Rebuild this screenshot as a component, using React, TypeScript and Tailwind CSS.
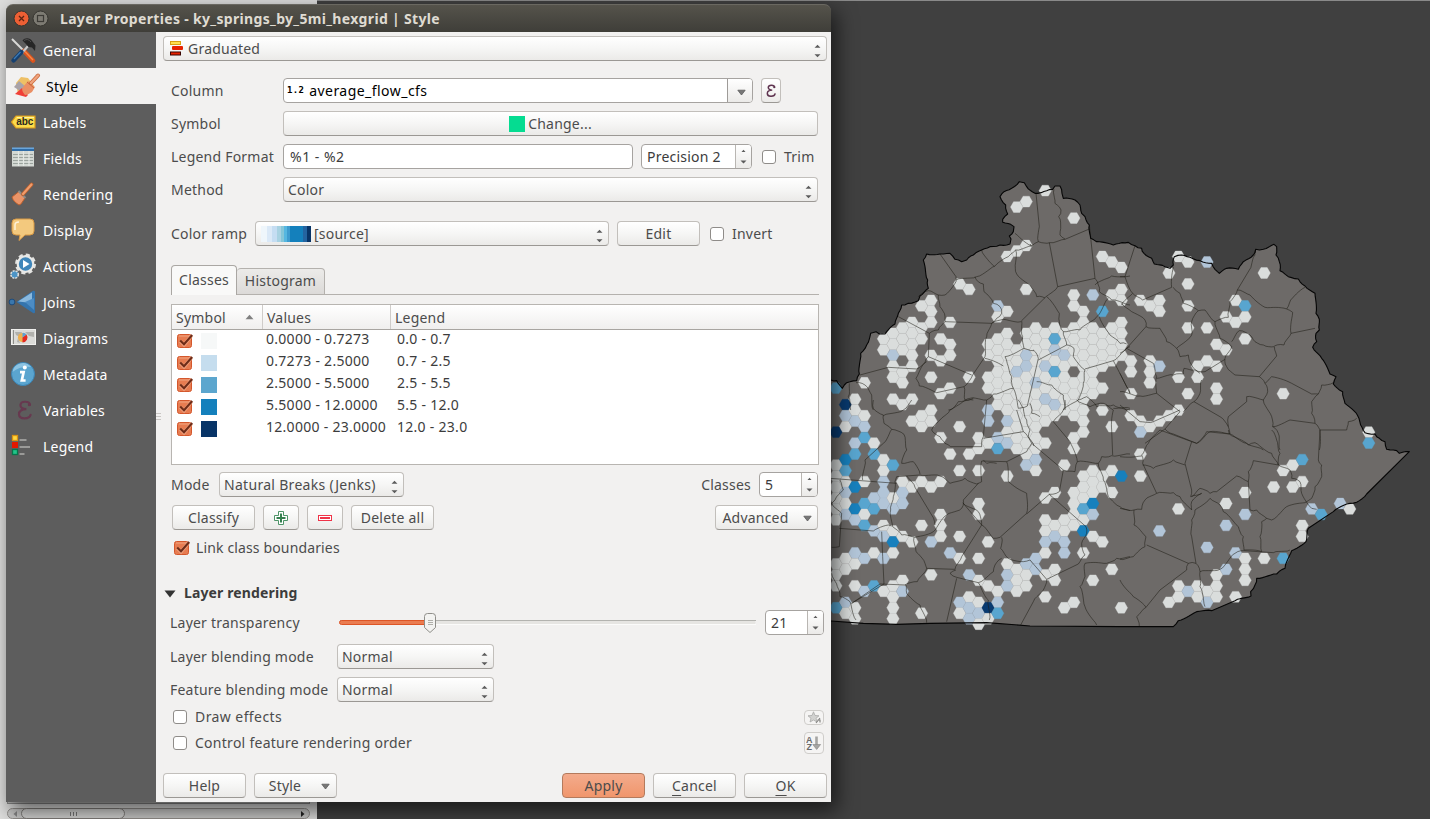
import React from "react";

type P = { children?: React.ReactNode; className?: string };

const HEX_COLORS: Record<string, string> = {
  w: "#dadddc",
  l: "#b2c5d8",
  m: "#58a5cf",
  b: "#1780bd",
  d: "#083a70",
};

// column -> runs of rows, each prefixed with its class letter
const HEXES: Record<string, string> = {
  "-1": "m-1 d3 w6:11 w15:17 m19",
  "0": "d0 l1 w2 b5 m6 w7 l8 w9 l10 w14:15 l18 w19",
  "1": "w0:1 l2 l4 m5 b8 b10 l11 l14 w15 w17 w19:20",
  "2": "w-2 w1 l2 m3 w7 m9 w10 m11 l14 l17",
  "3": "w4 m5 l9 m10 l12 w14 m17",
  "4": "w-6:-5 w5:6 l7:9 w11 l12 l14 w17",
  "5": "w-6:-5 l-4 w-3:-2 w0 m6 w9 l10 w12 b13 w14 w17:20",
  "6": "w-7:-5 w-3:-2 w0 w7 l8:9 w12 w16 l17",
  "7": "w-7:-3 w0 w2 w8 w13",
  "8": "w-9 w-7:-6 w1:2 w7 w11 w19",
  "9": "w-9:-7 w-4 w-2 w1:2 w8 l13 w16",
  "10": "w-6 w-4 w-1 w3 w7 w10:12",
  "11": "w-7 w-5:-4 w-1 w5 l14",
  "12": "w-11 w2 w6 w12 w14 l18 w19",
  "13": "w-10 w-2 w5 l16 w18 l19:20",
  "14": "w3:4 w6 w9:10 w14 w16 w18 l19 w20",
  "15": "w-5:-4 w-2:-1 l1:2 w4 w13 w17 d19 w20",
  "16": "l-9 w-8 w-6:0 l3 m4 w17 l18 m19",
  "17": "w-13 w-8 w-6:1 l2 w3 l4 w7 w15 l16:17",
  "18": "w-18 w-14 w-5:-4 l-3 w-2:4 w15:17",
  "19": "w-18 w-14 w-10 w-6:-5 l-4:-3 w-2:5 l6 l15 w16:17",
  "20": "w-7:-3 l-2 w-1:4 l5 w6 l14:15",
  "21": "w-19 w-6:-4 l-3 w-2:-1 l0 w1:2 w4 w9 w11:12 l13 w14 w16 w18",
  "22": "w-7 m-6 l-5 w-4 m-3 w-2:-1 l0 w1 w8 w11 l12 w15:16",
  "23": "w-6:-5 l-4 w-3:1 w6 w11:12 l13:14 w19",
  "24": "w-17 w-10:-9 w-7:-4 w-2:-1 w0:1 w3:4 w8:11 w18",
  "25": "w-8:3 w7:9 m10 w11 b12 w14",
  "26": "l-10 w-7:-1 w6:8 b9 l10 w12 w16",
  "27": "w-13 m-8 w-6:-3 w-1 w1 w7:8 w13",
  "28": "w-13 w-10 w-7:-4 w2 w6 w8 w15",
  "29": "w-12 w-10:-9 w-7:-4 b7 w19",
  "30": "w-4:-3 w-1 w1",
  "31": "w-9 w2 l3 w5 w7",
  "32": "w-9 w-4:-2 w2",
  "33": "w-9:-8 l-3 w2 l12",
  "34": "w-12 w1 w18",
  "35": "w-13 w-2 w1 w10 w17:18",
  "36": "w-13 w-11 w-9 w-7 w-1 l17",
  "37": "w-3:-2 w17:18",
  "38": "l-13 w-7 w-4 l13 w17 l18",
  "39": "w-5 w-3 w-1:0 w16:18",
  "40": "w-8 w-5 w9 l11 l15",
  "41": "w-9 w-7 l14 w18",
  "42": "m-9 w-8 w-6 w8 l10 w14:16",
  "44": "w-12 w14",
  "45": "w8",
  "46": "w-1 w6 m14",
  "47": "w6 w8",
  "48": "m5 w7 w11:12",
  "49": "l10",
  "50": "m10",
  "52": "l9",
  "53": "w10",
  "55": "w3 m4",
};

const OUTLINE =
  "M-40 640L3 630L20 632L37 655L43 645L50 638L80 632L88 612L92 550L110 525L122 490L138 485L148 492L165 492L195 462L205 430L215 405L235 400L265 392L270 378L295 355L293 330L285 290L280 270L290 252L330 252L360 250L375 268L395 275L410 270L430 255L455 240L480 230L510 225L540 222L543 207L538 198L550 185L552 170L542 163L518 157L518 148L533 132L527 105L510 80L522 65L545 55L568 35L583 38L590 50L615 70L625 70L650 62L668 58L675 48L690 48L696 70L700 85L735 90L750 105L755 130L765 140L778 165L782 205L800 215L850 225L875 218L895 217L915 227L935 235L942 250L965 265L973 282L1005 290L1020 295L1030 285L1033 260L1055 255L1080 262L1110 272L1145 280L1155 298L1168 310L1190 295L1225 298L1240 275L1270 255L1277 238L1300 238L1332 223L1340 230L1338 255L1348 275L1350 302L1375 320L1405 327L1425 348L1455 370L1458 430L1468 448L1468 480L1458 490L1460 515L1448 532L1475 565L1500 612L1518 620L1510 642L1538 665L1545 700L1582 735L1592 765L1605 788L1635 792L1648 805L1665 815L1670 838L1700 842L1708 850L1738 845L1610 972L1580 997L1550 1002L1510 1025L1435 1075L1428 1115L1385 1142L1375 1165L1365 1195L1340 1212L1280 1225L1275 1245L1262 1265L1263 1278L1215 1292L1145 1322L1100 1325L1045 1352L1030 1370L870 1370L600 1368L470 1358L300 1360L200 1363L100 1360L3 1353L-40 1350Z";

// county lines of the four map quarters, each in its own tripled local units
const NW =
  "M618 70L628 170L625 215M672 58L675 100L693 120L686 140L692 165L690 195L705 207M625 215L660 218L705 208L778 177M778 165L795 325L805 345L808 365M658 218L683 350L648 380L575 452M683 350L795 325M555 190L605 228L557 240L556 295L560 312L600 345L620 380L645 384M605 228L625 215M605 228L600 222M557 240L535 260L495 288L440 320L378 330M455 240L478 275L493 290M330 252L378 320L378 335L345 375L325 375L295 362L265 380M325 375L330 410L345 440L345 455L485 460L520 448L573 455M435 320L445 335L460 342L462 365L478 380L490 400L510 410L515 430L500 445L485 460L470 500L465 560L428 615L402 650L405 690M205 440L298 490L295 560L285 578L258 625L268 648L320 668L402 650M345 455L325 480L298 490M90 615L175 592L260 597L290 575M295 560L425 615M465 565L520 588M575 452L578 500L582 535L525 560L535 590L545 620L550 655L490 672L470 690L420 685L385 705L355 720M610 540L625 565L592 708L565 715L550 655M625 570L710 525L700 485L688 455L688 430L650 380M700 485L750 480L800 440L835 385M795 345L845 318L900 318M808 365L845 390L900 405M808 440L840 495L870 520L890 522M710 525L732 535L730 560L765 600L760 640L745 690L700 720M765 597L850 572L900 530M850 572L890 650L900 670M620 635L665 645L700 675L705 720M78 638L105 645L125 675L130 720M405 690L430 685M745 690L770 680L800 710L850 705L900 720M58 640L55 680L62 720M582 535L612 542";
const SW =
  "M130 0L130 25L160 45L162 70L185 88L222 103L230 150L215 190L250 185L270 222M160 47L220 30L245 0M185 88L160 130L105 180L98 240M305 90L330 110L345 130L362 140L455 140L460 110L470 0M305 90L330 60L360 30L385 5L430 0M460 115L580 95L560 30M580 95L605 130L590 155L530 185L455 183L455 245L440 252L405 235L360 250L330 228L270 225L200 230L195 245L190 290L182 330L188 380L215 405L255 412L310 395L350 345L395 325L400 300L445 250M605 130L700 210L735 215L742 185L805 190L815 170L845 167L900 162M530 185L535 245L590 280L590 340L510 412L490 415L455 375L398 308M400 310L445 335L455 375L395 470L375 508L290 505L285 490L258 455L252 412M700 210L688 275L658 283L590 342M658 283L768 380L770 400L755 430L765 465L745 492L650 538L600 480L580 485L535 475L512 445L515 412M515 475L495 495L490 515L445 548L380 532L360 520L378 510M445 548L475 600L478 660M380 535L350 665M650 538L640 570L610 605L572 675M765 490L765 530L750 560L765 620L800 675M765 490L830 490L860 475L900 470M0 235L200 250M230 228L255 262L305 345L315 375M30 240L40 270L15 300L5 310L35 340L28 440L5 442M28 385L130 393L175 375L185 378M155 395L158 470L162 552M65 610L150 552L228 555L230 580L270 615L290 668M162 552L65 610M290 505L262 545L225 555M5 520L22 560L30 590L60 605L78 660M805 190L820 240L835 290L870 320L900 332M670 65L720 125L742 185M670 65L700 30L705 0M740 0L780 20L820 10L850 30L845 90L848 165M850 25L900 25M460 180L470 190L500 190M565 0L580 25L590 60L600 90L595 110L612 138M600 10L605 40L630 50";
const NE =
  "M45 47L15 140L38 190L68 210L155 172L160 110M0 140L15 140M38 190L5 225M160 172L180 190L190 220L235 242L255 240L285 275L300 325L335 350L315 385L320 410L345 435L418 440L470 378L463 350L430 345L405 335L390 315L358 302L335 335M285 275L325 262L330 215L352 180L388 120L405 75L407 58M352 180L390 195L435 232L500 237L518 247L513 310L585 295M500 237L512 210L555 172M513 310L492 345L463 348M5 220L35 245L75 270L78 290L20 355L100 400L110 440L110 490L60 498L0 485M78 290L120 295L140 335L170 355L215 315L215 275L235 242M170 355L180 380L205 375L215 405L240 430M110 445L160 435L190 432L192 415L225 420L255 425L315 388M245 450L240 490L222 515L300 560L325 590L330 612L270 605L230 640L160 612L135 597L75 640M110 490L180 545L135 597M20 355L0 370M0 430L30 490M0 525L60 575L100 575L180 540M222 515L190 545M325 590L325 560L380 515L380 500L430 510L443 485L435 460L418 440M435 460L455 440L515 460L575 492L595 492L605 465L640 458M595 492L575 515L575 550L585 580L600 600L680 600L685 575L710 565M430 510L455 560L458 590L475 610L480 660M458 590L510 570L585 580M600 600L598 660M330 612L380 640L430 660";
const SE =
  "M120 0L85 40L65 75L68 100L110 190L160 188L180 200L215 240L215 215L245 190L212 200L215 180L195 100L215 35L230 40L260 5L328 12L385 45L405 38L455 70L475 105L400 92L385 125L385 155L350 138L290 185L270 190L240 175L215 200M120 0L215 35M68 105L100 115L160 90L195 105M65 78L0 80M110 190L75 210L65 238L42 240L42 285L78 320L75 350L40 380L0 388M42 240L0 235M225 240L270 205L300 225L310 245L355 290L370 320L372 360L425 365L420 320L425 275L440 265L410 240L390 240L385 155M225 240L215 270L215 320L228 400L205 400L80 345M205 400L200 420L120 480L78 532L50 560L58 590M228 400L240 425L300 418L345 370L372 362L460 368L510 360M440 265L455 270L500 230L555 218L575 205L585 170L605 140L605 105L595 90L600 0M455 0L470 30L480 70L475 105L510 120L515 145L540 155L545 190L575 235L590 238M240 425L240 470L255 530M0 450L40 500L78 532M328 12L325 0";

// Breaks medium-length segments into small steps so borders read as rivers and ridges.
function roughen(d: string, amp: number) {
  let px = 0;
  let py = 0;
  let n = 0;
  return (d.match(/[MLZ][^MLZ]*/g) ?? [])
    .map((t) => {
      if (t[0] === "Z") return t;
      const [x, y] = t.slice(1).trim().split(" ").map(Number);
      let out = "";
      const len = Math.hypot(x - px, y - py);
      if (t[0] === "L" && len > 12 && len < 66) {
        const steps = Math.floor(len / 8);
        for (let i = 1; i < steps; i++) {
          n++;
          const o = Math.sin(n * 12.9898) * amp;
          const k = i / steps;
          out += `L${(px + (x - px) * k - ((y - py) / len) * o).toFixed(1)} ${(py + (y - py) * k + ((x - px) / len) * o).toFixed(1)}`;
        }
      }
      px = x;
      py = y;
      return out + t;
    })
    .join("");
}

const EDGE = roughen(OUTLINE, 2.2);

function hexes() {
  const out: { x: number; y: number; k: string }[] = [];
  for (const c of Object.keys(HEXES)) {
    const col = Number(c);
    const odd = Math.abs(col) % 2 === 1;
    for (const t of HEXES[c].split(" ")) {
      const [a, b] = t.slice(1).split(":");
      for (let r = Number(a); r <= Number(b ?? a); r++) {
        out.push({ x: 845.4 + 9.516 * col, y: (odd ? 399.2 : 404.7) + 10.977 * r, k: t[0] });
      }
    }
  }
  return out;
}

function MapCanvas() {
  return (
    <svg width="1430" height="819" viewBox="0 0 1430 819" className="block">
      <path d="M0 0.5H1430" stroke="#8a8a8a" />
      <g transform="translate(830 170) scale(.33333)">
        <path d={EDGE} fill="#6d6a68" />
      </g>
      <g>
        {hexes().map((h, i) => (
          <path
            key={i}
            d="M-6.2 0L-3.1 -5.4H3.1L6.2 0L3.1 5.4H-3.1Z"
            transform={`translate(${h.x} ${h.y})`}
            fill={HEX_COLORS[h.k]}
            stroke={HEX_COLORS[h.k]}
            strokeWidth=".35"
          />
        ))}
      </g>
      <g fill="none" stroke="#1e1c14" strokeOpacity=".58" strokeWidth="2.8" strokeLinejoin="round">
        <path d={roughen(NW, 2.6)} transform="translate(830 170) scale(.33333)" />
        <path d={roughen(SW, 2.6)} transform="translate(830 400) scale(.33333)" />
        <path d={roughen(NE, 2.6)} transform="translate(1120 230) scale(.33333)" />
        <path d={roughen(SE, 2.6)} transform="translate(1120 430) scale(.33333)" />
      </g>
      <g transform="translate(830 170) scale(.33333)">
        <path d={EDGE} fill="none" stroke="#060606" strokeWidth="3.3" strokeLinejoin="round" />
      </g>
    </svg>
  );
}

const face = "border border-[#c2bfbb] border-b-[#9b9894] bg-linear-to-b from-white via-[#f6f6f5] to-[#ebeae8]";

function Btn({ children, className = "" }: P) {
  return (
    <div className={`flex h-[25px] shrink-0 items-center justify-center rounded-[4px] ${face} ${className}`}>{children}</div>
  );
}

function UpDown({ className = "" }: P) {
  return (
    <svg width="7" height="14" viewBox="0 0 7 14" className={`shrink-0 ${className}`}>
      <path d="M.5 3.8L3.5 .8L6.5 3.8ZM.5 10.2L3.5 13.2L6.5 10.2Z" fill="#5c5c5c" />
    </svg>
  );
}

function Combo({ children, className = "" }: P) {
  return (
    <div className={`flex h-[25px] shrink-0 items-center rounded-[4px] pr-[5px] pl-[4px] ${face} ${className}`}>
      {children}
      <UpDown className="mt-[4px] ml-auto" />
    </div>
  );
}

function Spin({ children, className = "" }: P) {
  return (
    <div className={`flex h-[25px] shrink-0 overflow-hidden rounded-[4px] border border-[#a6a3a0] bg-white text-[#3c3c3c] ${className}`}>
      <div className="flex flex-1 items-center pl-[5px] whitespace-nowrap">{children}</div>
      <div className="flex w-[16px] shrink-0 items-center justify-center border-l border-[#b9b6b2] bg-linear-to-b from-white to-[#ebeae8]">
        <svg width="7" height="15" viewBox="0 0 7 15">
          <path d="M1.5 3L3.5 .8L5.5 3ZM.5 11.5L3.5 14.5L6.5 11.5Z" fill="#5c5c5c" />
        </svg>
      </div>
    </div>
  );
}

function Box({ className = "" }: P) {
  return <div className={`size-[14px] shrink-0 rounded-[3px] border border-[#8f8c89] bg-white ${className}`} />;
}

function Checked({ className = "" }: P) {
  return (
    <svg width="17" height="16" viewBox="0 0 17 16" className={`shrink-0 ${className}`}>
      <rect x=".5" y="1.5" width="14" height="13" rx="2" fill="#e77c51" stroke="#d4572c" />
      <path d="M2 3H13" stroke="#f1a582" />
      <path d="M3.2 8L7 11.8L14.8 2.4" fill="none" stroke="#f3b496" strokeWidth="3.6" opacity=".6" />
      <path d="M3.2 7.4L7 11.2L15.2 2" fill="none" stroke="#6e2c18" strokeWidth="2.1" />
    </svg>
  );
}

function Down({ className = "" }: P) {
  return (
    <svg width="9" height="7" viewBox="0 0 9 7" className={`shrink-0 ${className}`}>
      <path d="M.8 1.2H8.2L4.500 6Z" fill="#777" stroke="#5a5a5a" strokeWidth=".8" />
    </svg>
  );
}

function Epsilon({ size, color }: { size: number; color: string }) {
  return (
    <svg width={size} height={(size * 4) / 3} viewBox="0 0 15 20">
      <path
        d="M13 4.8C12.6 1.2 4 .2 3.4 5C3.2 8 6.4 9.2 9.4 9.2C5 9.2 1.8 10.8 2 14.4C2.4 20 12.6 19.4 13.6 14.8"
        fill="none"
        stroke={color}
        strokeWidth="2.2"
        strokeLinecap="round"
      />
      <circle cx="12.3" cy="4.8" r="1.5" fill={color} />
    </svg>
  );
}

const ICONS: Record<string, React.ReactNode> = {
  General: (
    <>
      <path d="M1 1L14 14" stroke="#d9d9d7" strokeWidth="2" />
      <path d="M13 13L22 22.5" stroke="#d9531e" strokeWidth="4.6" strokeLinecap="round" />
      <path d="M14 13.5L22 22" stroke="#f58a4a" strokeWidth="1.4" />
      <path d="M17 8L11 15" stroke="#c9c9c9" strokeWidth="2.2" />
      <path d="M10.500 14L2.500 22.500" stroke="#16406f" strokeWidth="4.400" strokeLinecap="round" />
      <path d="M9.500 14L3 21" stroke="#3d7ab5" strokeWidth="1.200" />
      <path d="M11.500 2.500C14 -.5 19 -.5 21.500 3.500L24.500 7.500L24 13L21 9.500L17.500 9L14.500 5.500Z" fill="#262626" />
      <path d="M13 2.500Q17 0 20 4" stroke="#4f4f4f" />
    </>
  ),
  Style: (
    <>
      <path d="M3 9L8 3L15 4L21 12L11 22L5 20Z" fill="#eec065" />
      <path d="M1 13L6 7L13 13L10 19Z" fill="#a9a3a8" />
      <path d="M2 20L9 14L15 21L13 23Z" fill="#f04038" />
      <path d="M10 13L15 7L22 13L19 18C16 20 14 21 12 21C10 18 8 16 10 13Z" fill="#ea8f64" />
      <path d="M18 9L25 1.500" stroke="#c9683c" strokeWidth="4" strokeLinecap="round" />
      <path d="M18 9L25 1.500" stroke="#f0a47c" strokeWidth="2.400" strokeLinecap="round" />
      <path d="M14 8L21 14" stroke="#c9683c" />
    </>
  ),
  Labels: (
    <>
      <path d="M5 6H24V18H5L.5 12Z" fill="#fbdc4b" stroke="#d9991c" strokeWidth="1.200" />
      <path d="M6 7.500H23" stroke="#fff3a0" />
      <text x="5.200" y="15.300" fontSize="10" fontWeight="700" fontFamily="Liberation Sans" fill="#2c2a20" letterSpacing="0" textLength="17">
        abc
      </text>
    </>
  ),
  Fields: (
    <>
      <rect x="1" y="1.500" width="22" height="19" fill="#d3d8d3" />
      <rect x="1" y="1.500" width="22" height="3.500" fill="#2f6da8" />
      <path d="M1 2.500H23" stroke="#6aa5da" />
      <path d="M2 8.500H22M2 11.500H22M2 14.500H22M2 17.500H22" stroke="#9ba39e" />
      <path d="M7.500 5V20M12.500 5V20M18 5V20" stroke="#e4e8e4" strokeWidth="1.200" />
    </>
  ),
  Rendering: (
    <>
      <path d="M1 15L8 9.500L14 16L10 22L8 23C5 21 2 19 1 15Z" fill="#ea9468" stroke="#b9602f" />
      <path d="M7.500 9L14.500 16" stroke="#8f8b86" strokeWidth="2" />
      <path d="M12 12L20.500 2.500" stroke="#b9602f" strokeWidth="3.800" strokeLinecap="round" />
      <path d="M12 12L20.500 2.500" stroke="#f09c6c" strokeWidth="2.200" strokeLinecap="round" />
    </>
  ),
  Display: (
    <>
      <path d="M5 1H19Q23 1 23 5V13Q23 17 19 17H14L8 22.500L9 17H5Q1 17 1 13V5Q1 1 5 1Z" fill="#f3c97e" stroke="#d99a45" />
      <path d="M4 12V7Q4 4 8 4" fill="none" stroke="#fdf2d8" strokeWidth="1.500" />
    </>
  ),
  Actions: (
    <>
      <circle cx="14.500" cy="10" r="9.300" fill="none" stroke="#e3e3e1" strokeWidth="2.400" strokeDasharray="4.200 3.100" />
      <circle cx="14.500" cy="10" r="7.800" fill="#3f86ba" stroke="#e9e9e7" strokeWidth="2.200" />
      <path d="M12 6L18.500 10L12 14Z" fill="#fff" />
      <circle cx="3.600" cy="20.500" r="3.700" fill="#4c94c6" stroke="#dededc" strokeWidth="1.600" strokeDasharray="2 1" />
    </>
  ),
  Joins: (
    <>
      <path d="M5.500 12L22 .8Q24 .5 24 2V22Q24 24 22 23Z" fill="#3474ad" />
      <path d="M7 11.500L21 2.500V13Z" fill="#8ab9de" />
      <path d="M14 12L23 8V20Z" fill="#4c8cc4" />
      <circle cx="1" cy="12" r="2.900" fill="#3a77ad" stroke="#1f4a78" />
    </>
  ),
  Diagrams: (
    <>
      <rect x=".5" y="3.500" width="24" height="15" fill="#dbdbd8" stroke="#efefed" />
      <path d="M4 6H11L9 11L5 9ZM14 6H23V11L18 10L16 8ZM7 12L9 17L6 16Z" fill="#b1b1ad" />
      <path d="M2.500 4V18" stroke="#8d8d89" />
      <circle cx="11.500" cy="11.500" r="4.600" fill="#efb04e" />
      <path d="M11.500 11.500L15.500 8.500A5 5 0 0 1 11.500 16.500Z" fill="#e32a22" />
      <path d="M11.500 11.500V6.900A4.600 4.600 0 0 1 15.500 8.500Z" fill="#5aa0d8" />
    </>
  ),
  Metadata: (
    <>
      <circle cx="12" cy="12" r="11.500" fill="#5ba5cf" stroke="#3b84b4" />
      <path d="M1.500 10A10.500 10.500 0 0 1 20 5Q9 4 1.500 10Z" fill="#8cc3e2" />
      <circle cx="13.800" cy="5.600" r="2" fill="#fff" />
      <path d="M9 10.200H12.600L10.800 18.500H14.600" fill="none" stroke="#fff" strokeWidth="2.700" />
    </>
  ),
  Legend: (
    <>
      <rect x="1.500" y="1.500" width="5" height="5" fill="#ffd740" stroke="#d99213" strokeWidth="1.300" />
      <rect x="1" y="8" width="6" height="6" fill="#e21800" />
      <rect x="1.500" y="15.500" width="5" height="5" fill="#22c489" stroke="#08744a" strokeWidth="1.300" />
      <path d="M8.500 6H15.500M8.500 13H19M8.500 20H13.500" stroke="#9a9a98" strokeWidth="1.800" />
    </>
  ),
};

const NAV = ["General", "Style", "Labels", "Fields", "Rendering", "Display", "Actions", "Joins", "Diagrams", "Metadata", "Variables", "Legend"];

const CLASSES = [
  { fill: "bg-[#f6f8f8]", v: "0.0000 - 0.7273", l: "0.0 - 0.7" },
  { fill: "bg-[#c5ddee]", v: "0.7273 - 2.5000", l: "0.7 - 2.5" },
  { fill: "bg-[#5ca6ce]", v: "2.5000 - 5.5000", l: "2.5 - 5.5" },
  { fill: "bg-[#1480bc]", v: "5.5000 - 12.0000", l: "5.5 - 12.0" },
  { fill: "bg-[#083467]", v: "12.0000 - 23.0000", l: "12.0 - 23.0" },
];

function Sidebar() {
  return (
    <nav className="w-[150px] shrink-0 bg-[#5d5d5d]">
      {NAV.map((n) => (
        <div
          key={n}
          className={`flex h-9 items-center ${n === "Style" ? "bg-[#f2f1f0] pl-[7px] text-black" : "pl-[5px] text-white"}`}
        >
          <div className={`flex w-[26px] shrink-0 justify-center ${n === "Style" ? "mr-[7px]" : "mr-[6px]"}`}>
            {n === "Variables" ? (
              <Epsilon size={15} color="#67394f" />
            ) : (
              <svg width="26" height="24" viewBox="0 0 26 24" fill="none" className="overflow-visible">
                {ICONS[n]}
              </svg>
            )}
          </div>
          <span className="pt-[2px]">{n}</span>
        </div>
      ))}
    </nav>
  );
}

function Content() {
  return (
    <main className="flex w-[675px] flex-col bg-[#f2f1f0] text-[#4c4c4c]">
      <Combo className="mt-[4px] ml-[7px] w-[664px]">
        <svg width="14" height="15" viewBox="0 0 14 15" className="mr-[4px] ml-[2px]">
          <rect x=".5" y=".5" width="10" height="3" fill="#ffe14d" stroke="#d9a013" />
          <rect x="2" y="5" width="11" height="4" rx="1" fill="#e62200" />
          <rect x=".5" y="11" width="10" height="3" fill="#e62200" stroke="#3a0500" />
        </svg>
        Graduated
      </Combo>

      <div className="mt-[17px] ml-[15px] flex h-[25px] items-center">
        <span className="w-[112px]">Column</span>
        <div className="flex h-[25px] w-[470px] overflow-hidden rounded-[4px] border border-[#a6a3a0] bg-white">
          <div className="flex flex-1 items-center pl-[3px] text-black">
            <b className="mr-[5px] font-['DejaVu_Sans_Mono'] text-[9px] leading-none font-bold tracking-[0.3px]">1.2</b>
            <span className="tracking-[0.46px]">average_flow_cfs</span>
          </div>
          <div className="flex w-[25px] shrink-0 items-center justify-center border-l border-[#9e9b98] bg-linear-to-b from-white to-[#ebeae8] pt-[4px] pl-[2px]">
            <Down />
          </div>
        </div>
        <Btn className="ml-[8px] w-[20px]">
          <Epsilon size={10} color="#5f3450" />
        </Btn>
      </div>

      <div className="mt-[8px] ml-[15px] flex h-[25px] items-center">
        <span className="w-[112px]">Symbol</span>
        <Btn className="w-[535px]">
          <span className="mr-[3px] size-4 bg-[#05dc91]" />
          Change...
        </Btn>
      </div>

      <div className="mt-[8px] ml-[15px] flex h-[25px] items-center">
        <span className="w-[112px] shrink-0 whitespace-nowrap">Legend Format</span>
        <div className="flex h-[25px] w-[350px] items-center rounded-[4px] border border-[#a6a3a0] bg-white pl-[6px] tracking-[0.5px] text-[#3c3c3c]">
          %1 - %2
        </div>
        <Spin className="ml-[8px] w-[111px]">
          <span>Precision 2</span>
        </Spin>
        <Box className="ml-[10px]" />
        <span className="ml-[8px]">Trim</span>
      </div>

      <div className="mt-[8px] ml-[15px] flex h-[25px] items-center">
        <span className="w-[112px]">Method</span>
        <Combo className="w-[535px]">Color</Combo>
      </div>

      <div className="mt-[19px] ml-[15px] flex h-[25px] items-center">
        <span className="w-[84px] shrink-0 whitespace-nowrap">Color ramp</span>
        <Combo className="w-[354px]">
          <span className="mr-[3px] ml-[1px] flex h-4 w-[50px]">
            <i className="w-[6px] bg-[#eff6fb]" />
            <i className="w-[5px] bg-[#dbe9f7]" />
            <i className="w-[5px] bg-[#c5ddf2]" />
            <i className="w-[4px] bg-[#a8d2e2]" />
            <i className="w-[3px] bg-[#86c6d8]" />
            <i className="w-[3px] bg-[#56b7e0]" />
            <i className="w-[3px] bg-[#3e9ccf]" />
            <i className="w-[13px] bg-[#1480bc]" />
            <i className="w-[4px] bg-[#2464a0]" />
            <i className="w-[4px] bg-[#083467]" />
          </span>
          [source]
        </Combo>
        <Btn className="ml-[8px] w-[83px]">Edit</Btn>
        <Box className="ml-[10px]" />
        <span className="ml-[8px]">Invert</span>
      </div>

      <div className="mt-[19px] ml-[15px] flex h-[30px] w-[648px] items-end">
        <div className="flex h-[30px] w-[66px] items-center justify-center rounded-t-[4px] border border-b-0 border-[#aaa7a3] bg-[#f9f9f8] pb-[2px]">Classes</div>
        <div className="flex h-[27px] w-[88px] items-center justify-center rounded-t-[4px] border border-l-0 border-[#b4b1ad] bg-linear-to-b from-[#ecebe9] to-[#dcdad8] pb-[2px]">
          Histogram
        </div>
        <div className="h-px flex-1 bg-[#b4b1ad]" />
      </div>

      <div className="mt-[9px] ml-[15px] h-[161px] w-[648px] border border-[#b8b5b1] bg-white">
        <div className="flex h-[25px] items-center border-b border-[#a8a5a1] bg-linear-to-b from-white to-[#f0efee]">
          <div className="flex h-full w-[91px] items-center justify-between border-r border-[#cfccc9] pt-[2px] pr-[8px] pl-[4px]">
            Symbol
            <svg width="9" height="6" viewBox="0 0 9 6" className="mb-[2px]">
              <path d="M.5 5.200H8.500L4.500 .8Z" fill="#808080" />
            </svg>
          </div>
          <div className="flex h-full w-[128px] items-center border-r border-[#cfccc9] pt-[2px] pl-[4px]">Values</div>
          <div className="pt-[2px] pl-[4px]">Legend</div>
        </div>
        {CLASSES.map((c) => (
          <div key={c.v} className="flex h-[22px] items-start text-[#3c3c3c]">
            <Checked className="mt-[3px] ml-[5px]" />
            <span className={`mt-[3px] ml-[7px] size-4 ${c.fill}`} />
            <span className="ml-[49px] w-[131px] leading-[18px] tracking-[0.28px] whitespace-nowrap">{c.v}</span>
            <span className="leading-[18px] tracking-[0.28px] whitespace-nowrap">{c.l}</span>
          </div>
        ))}
      </div>

      <div className="mt-[7px] ml-[15px] flex h-[25px] w-[647px] items-center">
        <span className="w-[48px]">Mode</span>
        <Combo className="w-[185px] tracking-[0.3px]">Natural Breaks (Jenks)</Combo>
        <span className="mr-[8px] ml-auto">Classes</span>
        <Spin className="w-[59px]">5</Spin>
      </div>

      <div className="mt-[8px] ml-[16px] flex h-[25px] w-[646px] items-center gap-[8px]">
        <Btn className="w-[83px]">Classify</Btn>
        <Btn className="w-[36px]">
          <svg width="14" height="14" viewBox="0 0 14 14">
            <path d="M4.500 .5H9.500V4.500H13.500V9.500H9.500V13.500H4.500V9.500H.5V4.500H4.500Z" fill="#fff" stroke="#4e9468" />
            <path d="M7 2.500V11.500M2.500 7H11.500" stroke="#35804f" strokeWidth="2" />
          </svg>
        </Btn>
        <Btn className="w-[36px]">
          <svg width="14" height="6" viewBox="0 0 14 6">
            <rect x=".5" y=".5" width="13" height="5" fill="#fff" stroke="#ef3348" />
            <path d="M2 3H12" stroke="#ef3348" strokeWidth="2" />
          </svg>
        </Btn>
        <Btn className="w-[83px]">Delete all</Btn>
        <Btn className="ml-auto w-[103px] gap-[14px] pl-px">
          Advanced
          <Down className="mt-[2px]" />
        </Btn>
      </div>

      <div className="mt-[8px] ml-[18px] flex h-[20px] items-center">
        <Checked />
        <span className="ml-[5px] tracking-[0.14px]">Link class boundaries</span>
      </div>

      <div className="mt-[25px] ml-[8px] flex h-[20px] items-center">
        <svg width="12" height="8" viewBox="0 0 12 8" className="mt-[2px] mr-[8px]">
          <path d="M.5 .5H11.500L6 7.500Z" fill="#333" />
        </svg>
        <b className="font-bold tracking-[0.13px] text-[#3c3c3c]">Layer rendering</b>
      </div>

      <div className="mt-[7px] ml-[14px] flex h-[25px] w-[654px] items-center">
        <span className="w-[169px]">Layer transparency</span>
        <svg width="418" height="22" viewBox="0 0 418 22">
          <rect x=".5" y="8.500" width="416" height="4" rx="2" fill="#e6e5e2" />
          <path d="M1 8.500H417" stroke="#b3b3af" />
          <path d="M1 12.500H417" stroke="#fbfbfa" />
          <rect x=".5" y="8.500" width="90" height="4" rx="2" fill="#ea7c50" stroke="#dd5526" />
          <path d="M85.500 4.500Q85.500 1.500 88.500 1.500H93.500Q96.500 1.500 96.500 4.500V15.500L91 20.500L85.500 15.500Z" fill="#f3f3f1" stroke="#8f8e89" />
          <path d="M89 8.500H94M89 10.500H94M89 12.500H94" stroke="#b0afaa" />
        </svg>
        <Spin className="ml-auto w-[59px]">21</Spin>
      </div>

      <div className="mt-[9px] ml-[14px] flex h-[25px] items-center">
        <span className="w-[167px]">Layer blending mode</span>
        <Combo className="w-[157px]">Normal</Combo>
      </div>
      <div className="mt-[8px] ml-[14px] flex h-[25px] items-center">
        <span className="w-[167px] whitespace-nowrap">Feature blending mode</span>
        <Combo className="w-[157px]">Normal</Combo>
      </div>

      <div className="mt-[5px] ml-[17px] flex h-[20px] w-[651px] items-center">
        <Box />
        <span className="ml-[8px] tracking-[0.42px]">Draw effects</span>
        <div className="ml-auto flex h-[15px] w-[20px] items-center justify-center rounded-[4px] border border-[#cfcdca] bg-[#f5f4f3]">
          <svg width="14" height="13" viewBox="0 0 14 13">
            <path d="M6.500 .8L8 4.500L12 4.800L9 7.300L10 11L6.500 9L3 11L4 7.300L1 4.800L5 4.500Z" fill="#d2d2d0" stroke="#aaaaa8" strokeWidth=".8" />
            <path d="M9 12L13 7M10.500 9H13V11.500" fill="none" stroke="#858583" strokeWidth="1.200" />
          </svg>
        </div>
      </div>
      <div className="mt-[6px] ml-[17px] flex h-[20px] w-[651px] items-center">
        <Box />
        <span className="ml-[8px] tracking-[0.27px]">Control feature rendering order</span>
        <div className="ml-auto flex h-[22px] w-[20px] items-center justify-center rounded-[4px] border border-[#cfcdca] bg-[#f5f4f3]">
          <svg width="16" height="16" viewBox="0 0 16 16" fontFamily="Liberation Sans" fontWeight="700">
            <text x="0" y="7.500" fontSize="9" fill="#6a6a6a">A</text>
            <text x=".4" y="15" fontSize="9" fill="#6a6a6a">Z</text>
            <path d="M10.500 1.500V10" stroke="#a5a5a3" strokeWidth="2.600" />
            <path d="M6.800 9.500H14.600L10.700 14.500Z" fill="#a5a5a3" stroke="#858583" strokeWidth=".6" />
          </svg>
        </div>
      </div>

      <div className="mt-[20px] ml-[7px] flex h-[25px] w-[664px] items-center gap-[8px]">
        <Btn className="w-[83px]">Help</Btn>
        <Btn className="w-[83px] gap-[20px] pl-[8px]">
          Style
          <Down className="mt-[2px]" />
        </Btn>
        <div className="ml-auto flex h-[25px] w-[83px] items-center justify-center rounded-[4px] border border-[#b47a5c] bg-linear-to-b from-[#f3ab8c] to-[#f0966c]">
          Apply
        </div>
        <Btn className="w-[83px]">
          <span><u className="underline-offset-[4px]">C</u>ancel</span>
        </Btn>
        <Btn className="w-[83px]">
          <span><u className="underline-offset-[4px]">O</u>K</span>
        </Btn>
      </div>
    </main>
  );
}

export default function App() {
  return (
    <div className="relative h-[819px] w-[1430px] overflow-hidden bg-[#404040] font-['Noto_Sans','Open_Sans',sans-serif] text-[14px] leading-[20px] tracking-[0.22px]">
      <MapCanvas />
      <div className="absolute top-0 left-0 flex h-[819px] w-[317px] flex-col justify-end bg-[#dededd]">
        <div className="ml-[7px] h-[12px] w-[303px] border border-[#8a8a8a] bg-[#bdbdbc]" />
        <div className="mt-[4px] ml-[7px] flex h-[11px] w-[303px] items-center rounded-full border border-[#93908d] bg-[#c9c9c8]">
          <svg width="13" height="10" viewBox="0 0 13 10"><path d="M9 2V8L5.500 5Z" fill="#888" /></svg>
          <div className="flex h-[11px] w-[104px] items-center justify-center gap-[2px] rounded-full border border-[#807d7a] bg-[#d4d4d3]">
            <i className="h-[4px] w-px bg-[#777]" />
            <i className="h-[4px] w-px bg-[#777]" />
            <i className="h-[4px] w-px bg-[#777]" />
          </div>
          <svg width="11" height="10" viewBox="0 0 11 10" className="ml-auto"><path d="M3 2V8L6.500 5Z" fill="#222" /></svg>
        </div>
      </div>
      <div className="absolute top-[4px] left-[6px] flex h-[798px] w-[825px] flex-col rounded-t-[7px] shadow-[5px_8px_20px_1px_rgba(0,0,0,0.58)]">
        <header className="flex h-[28px] shrink-0 items-center rounded-t-[7px] border-t border-[#6a6861] bg-linear-to-b from-[#55534b] to-[#3f3e39] pl-[7px] text-[#dfdbd2]">
          <svg width="36" height="18" viewBox="0 0 36 18" className="mr-[11px]">
            <circle cx="8.500" cy="8.500" r="7.500" fill="#ec5f34" stroke="#35342f" />
            <path d="M6 6L11 11M11 6L6 11" stroke="#5c2412" strokeWidth="1.300" />
            <circle cx="27.500" cy="8.500" r="7.500" fill="#7d7b73" stroke="#35342f" />
            <rect x="24.500" y="5.500" width="6" height="6" fill="none" stroke="#3c3b36" strokeWidth="1.200" />
          </svg>
          <b className="text-[14px] font-bold tracking-[0.33px]">Layer Properties - ky_springs_by_5mi_hexgrid | Style</b>
        </header>
        <div className="flex flex-1">
          <Sidebar />
          <Content />
        </div>
        <div className="absolute top-[409px] left-[150px] flex flex-col gap-[2px]">
          <i className="h-px w-[5px] bg-[#c9c6c3]" />
          <i className="h-px w-[5px] bg-[#c9c6c3]" />
          <i className="h-px w-[5px] bg-[#c9c6c3]" />
        </div>
      </div>
    </div>
  );
}
